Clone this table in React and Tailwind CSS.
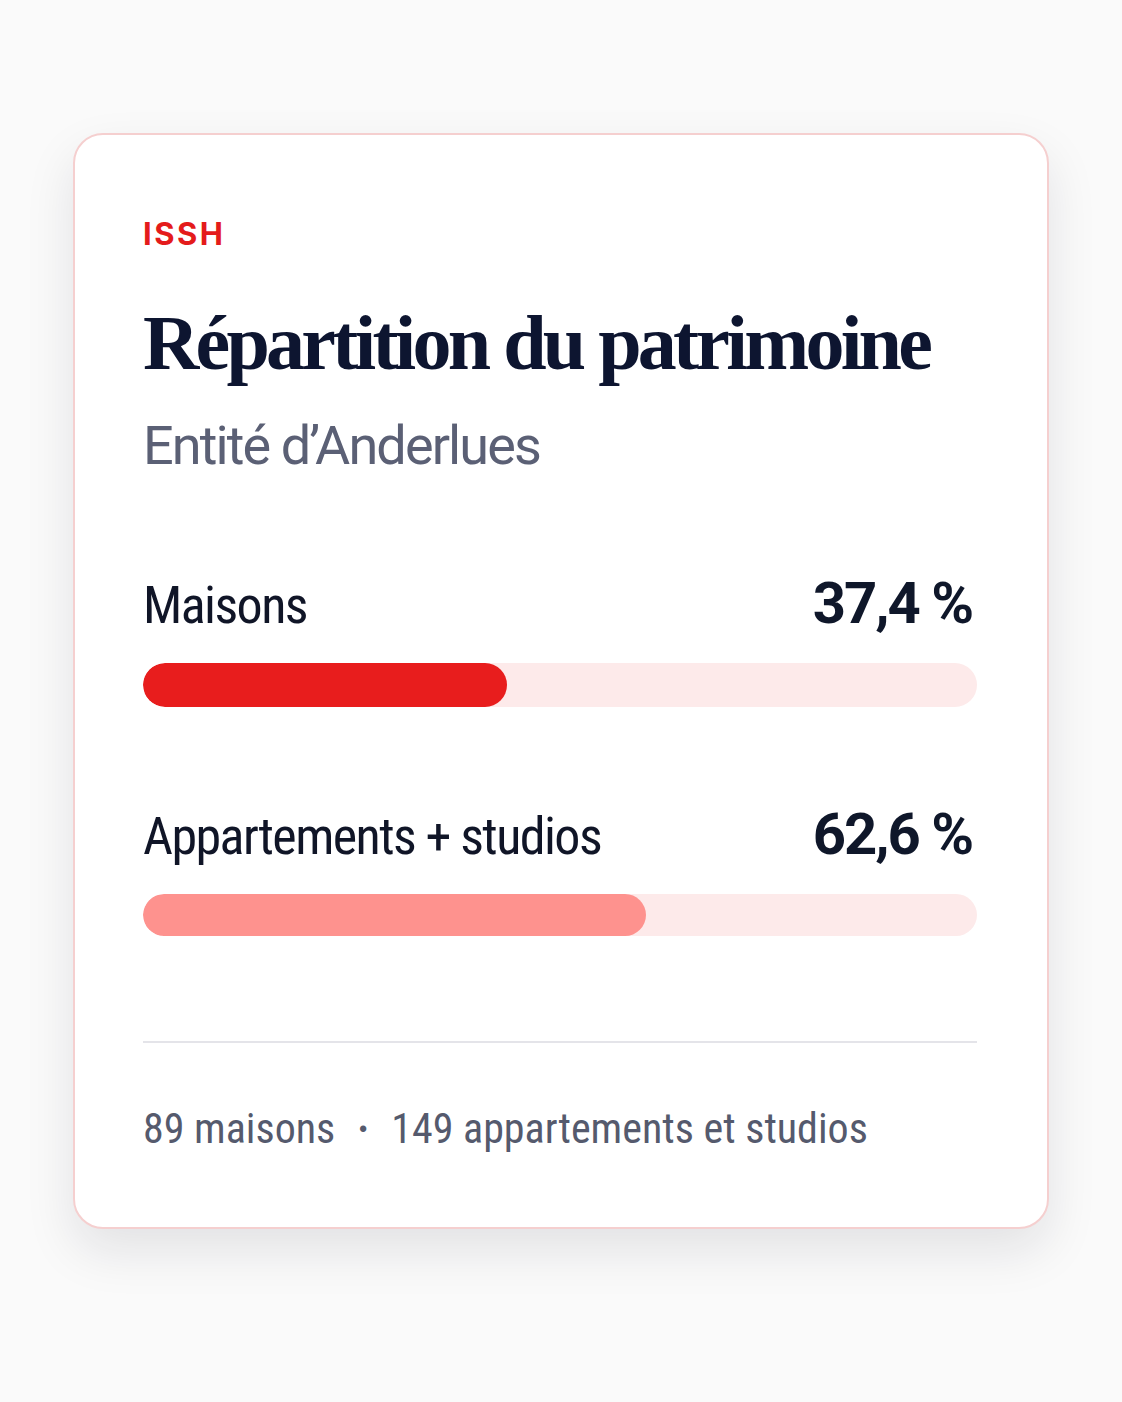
const ROWS = [
  { label: "Maisons", value: "37,4 %", fill: 43.7, color: "bg-[#e81d1d]", bar: "h-[44px]", top: "mt-[101px]" },
  { label: "Appartements + studios", value: "62,6 %", fill: 60.3, color: "bg-[#fe928e]", bar: "h-[42px]", top: "mt-[98px]" },
]

const condensed = "font-['Roboto_Condensed',Roboto,'Liberation_Sans',sans-serif]"

function ShareRow({ row }) {
  return (
    <div className={row.top}>
      <div className="flex items-baseline justify-between">
        <span className={`${condensed} text-[52px] leading-none tracking-[-0.03em] text-[#101527]`}>{row.label}</span>
        <span className="mr-[5px] font-['Roboto',sans-serif] text-[58px] leading-none font-bold tracking-[-0.035em] text-[#0f172a]">
          {row.value}
        </span>
      </div>
      <div className={`mt-[31px] ${row.bar} w-full rounded-full bg-[#fdeaea] overflow-hidden`}>
        <div className={`h-full rounded-full ${row.color}`} style={{ width: `${row.fill}%` }} />
      </div>
    </div>
  )
}

export default function App() {
  return (
    <div className="min-h-screen bg-[#fafafa] pt-[133px] pb-[172px]">
      <section className="mx-auto w-[976px] rounded-[30px] border-2 border-[#f5cfcf] bg-white pl-[68px] pr-[70px] pt-[83px] pb-[77px] shadow-[0_22px_50px_rgba(15,23,42,0.1)]">
        <p className="font-['Inter',sans-serif] text-[31px] leading-none font-bold tracking-[0.08em] text-[#e41b1b]">
          ISSH
        </p>
        <h1 className="mt-[55px] font-['Liberation_Serif',serif] text-[78px] leading-none font-bold tracking-[-0.048em] text-[#0d1530]">
          Répartition du patrimoine
        </h1>
        <p className="mt-[37px] font-['Roboto',sans-serif] text-[54px] leading-none tracking-[-0.035em] text-[#5b6075]">
          Entité d’Anderlues
        </p>

        {ROWS.map((row) => (
          <ShareRow key={row.label} row={row} />
        ))}

        <div className="mt-[105px] border-t-2 border-[#e4e4e9]" />

        <p className={`mt-[65px] ${condensed} text-[42px] leading-none text-[#555a6d]`}>
          89 maisons<span className="mx-[22px] font-bold">·</span>149 appartements et studios
        </p>
      </section>
    </div>
  )
}
